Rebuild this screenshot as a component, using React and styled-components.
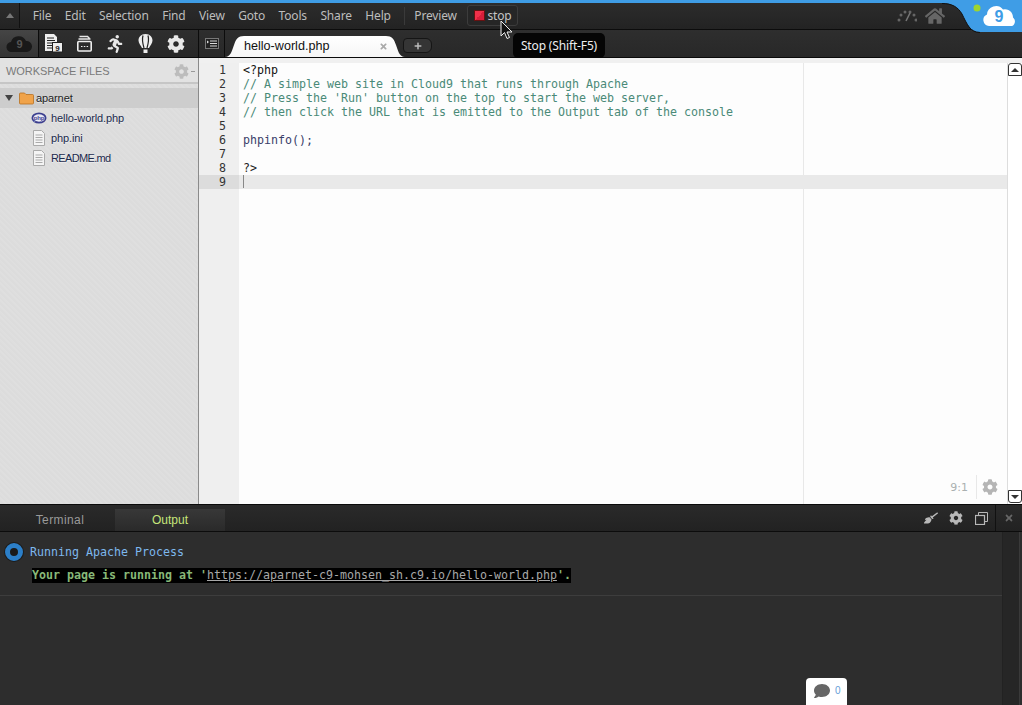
import React from "react";
import styled, { createGlobalStyle } from "styled-components";
import { FaRunning, FaCog, FaHome, FaComment, FaBroom, FaTimes, FaPlus } from "react-icons/fa";

const Global = createGlobalStyle`
  html, body { margin: 0; padding: 0; height: 100%; background: #2d2d2d; overflow: hidden; }
  #root { height: 100%; }
`;
const MONO = `"DejaVu Sans Mono", monospace`;
const UI = `"Noto Sans", "Open Sans", sans-serif`;
const SANS = `"Liberation Sans", Arial, sans-serif`;

const Page = styled.div`
  position: relative; width: 1022px; height: 705px; overflow: hidden;
  display: flex; flex-direction: column; font-family: ${SANS};
`;
const MenuBar = styled.div`
  height: 25px; padding-bottom: 1px; flex: none; display: flex; align-items: center;
  border-top: 3px solid #3f9de6;
  background: linear-gradient(#2c2c2c, #232323);
  border-bottom: 1px solid #0c0c0c;
`;
const Collapse = styled.div`
  width: 19px; height: 100%; flex: none; display: flex; align-items: center; justify-content: center;
  border-right: 1px solid #111; margin-right: 6px;
  &::before { content: ""; border-left: 4px solid transparent; border-right: 4px solid transparent; border-bottom: 5px solid #777; }
`;
const MenuItem = styled.span`
  font: 12px ${UI}; color: #bdbdbd; padding: 0 6.75px; white-space: nowrap; letter-spacing: -.17px;
`;
const MenuDivider = styled.div`
  width: 1px; height: 18px; background: #3a3a3a; margin: 0 3px 0 6px;
`;
const StopButton = styled.div`
  margin-left: 3px; width: 51px; height: 21px; box-sizing: border-box; border: 1px solid #3c3c3c; border-radius: 3px;
  background: #262626; display: flex; align-items: center; gap: 3px; padding-left: 6px;
  font: 12px ${UI}; color: #c4c4c4; letter-spacing: -.2px;
`;
const StopSquare = styled.div`
  width: 11px; height: 11px; box-sizing: border-box; background: linear-gradient(135deg, #f0304a 50%, #d81e3a 50%); border: 1px solid #611;
`;
const MenuSpacer = styled.div`flex: 1;`;
const StatusIcons = styled.div`
  display: flex; align-items: center; gap: 8px; margin-right: 77px; color: #666;
`;
const SecondBar = styled.div`
  height: 27px; flex: none; display: flex;
  background: linear-gradient(#2e2e2e, #282828);
  border-bottom: 1px solid #0a0a0a;
`;
const CloudSlot = styled.div`
  width: 38px; flex: none; display: flex; align-items: center; justify-content: center;
  background: linear-gradient(#454545, #343434); border-right: 1px solid #0c0c0c;
`;
const ToolIcons = styled.div`
  width: 160px; flex: none; display: flex; align-items: center; gap: 14px;
  padding-left: 6px; box-sizing: border-box; color: #e8e8e8; border-right: 1px solid #0c0c0c;
`;
const ListButton = styled.div`
  width: 26px; flex: none; display: flex; align-items: center; justify-content: center;
  border-right: 1px solid #0c0c0c; box-sizing: border-box; color: #ddd;
`;
const TabStrip = styled.div`
  flex: 1; display: flex; align-items: flex-end; min-width: 0;
`;
const Tab = styled.div`
  width: 180px; height: 21px; box-sizing: border-box; background: linear-gradient(#fff, #f6f6f6);
  clip-path: path("M0 21 C6 21 7 14 9 9 C11 3 13 0 19 0 L161 0 C167 0 169 3 171 9 C173 14 174 21 180 21 Z");
  display: flex; align-items: center; justify-content: space-between;
  padding: 0 17px 1px 19px; font: 12.6px ${SANS}; color: #111;
`;
const TabClose = styled.span`
  color: #aaa; display: flex; font-size: 9px;
`;
const AddTab = styled.div`
  width: 29px; height: 15px; margin: 0 0 4px -2px; box-sizing: border-box; border: 1px solid #151515; border-radius: 4px 6px 6px 4px;
  background: #353535; color: #bbb; display: flex; align-items: center; justify-content: center; font-size: 8px;
`;
const Main = styled.div`
  flex: none; height: 446px; display: flex;
`;
const Sidebar = styled.div`
  width: 199px; flex: none; box-sizing: border-box; border-right: 1px solid #8a8a8a;
  background: repeating-linear-gradient(45deg, #dfdfdf 0 1px, #dcdcdc 1px 3px, #dedede 3px 4px);
`;
const SidebarHead = styled.div`
  height: 26px; box-sizing: border-box; display: flex; align-items: center; justify-content: space-between;
  padding: 2px 3px 0 6px; font: 11px ${SANS}; color: #7a7a7a; letter-spacing: -.05px;
  border-bottom: 2px solid #c6c6c6; background: #e2e2e2; margin-bottom: 4px;
`;
const HeadGear = styled.span`
  color: #bcbcbc; display: flex; align-items: center; gap: 2px; font-size: 15px;
  &::after { content: ""; width: 4px; height: 1px; background: #999; }
`;
const Row = styled.div`
  height: 20px; display: flex; align-items: center; font: 11px ${SANS}; letter-spacing: ${p => p.$tight ? -.65 : -.1}px;
  text-shadow: 0 1px 0 rgba(255, 255, 255, .5);
  color: ${p => p.$root ? "#222" : "#1c2a4c"};
  padding-left: ${p => p.$root ? 5 : 31}px; gap: ${p => p.$root ? 2 : 4}px;
  background: ${p => p.$root ? "#cdcdcd" : "transparent"};
`;
const Arrow = styled.span`
  width: 0; height: 0; border-left: 4px solid transparent; border-right: 4px solid transparent;
  border-top: 6px solid #444; margin-right: 4px;
`;
const Editor = styled.div`
  flex: 1; display: flex; background: #fcfcfc; position: relative;
`;
const Gutter = styled.div`
  width: 40px; flex: none; box-sizing: border-box; padding-top: 5px; background: #efefef;
`;
const GutterNum = styled.div`
  height: 14px; padding-right: 13px; text-align: right;
  font: 11.63px/14px ${MONO}; color: #333; background: ${p => p.$active ? "#dcdcdc" : "transparent"};
`;
const Code = styled.div`
  flex: 1; padding-top: 5px; background: #fdfdfd; position: relative; box-sizing: border-box;
  border-radius: 5px 0 0 0;
`;
const CodeLine = styled.div`
  height: 14px; padding-left: 4px; font: 11.63px/14px ${MONO}; white-space: pre; position: relative;
  color: ${p => p.$c || "#222"}; background: ${p => p.$active ? "#e9e9e9" : "transparent"};
`;
const Caret = styled.span`
  display: inline-block; width: 1px; height: 13px; background: #888; vertical-align: top;
`;
const PrintMargin = styled.div`
  position: absolute; left: 564px; top: 0; bottom: 0; width: 1px; background: #e8e8e8;
`;
const TopShade = styled.div`
  position: absolute; left: 0; right: 0; top: 0; height: 5px; background: #f0f0f0;
`;
const EditorStatus = styled.div`
  position: absolute; right: 9px; bottom: 5px; height: 24px; display: flex; align-items: center; gap: 8px;
  font: 11px "DejaVu Sans", sans-serif; color: #aab0b0;
`;
const StatusGear = styled.span`
  display: flex; color: #b5b5b5; font-size: 16px; padding: 4px 0 4px 5px; border-left: 1px solid #e8e8e8;
`;
const Scrollbar = styled.div`
  width: 15px; flex: none; display: flex; flex-direction: column; justify-content: space-between;
  background: #fff; border-left: 1px solid #ddd; box-sizing: border-box; padding: 5px 0 1px;
`;
const ScrollButton = styled.div`
  height: 13px; box-sizing: border-box; border: 1px solid #333; border-radius: ${p => p.$up ? "3px 3px 0 0" : "0 0 3px 3px"};
  display: flex; align-items: center; justify-content: center; background: #fff;
  &::before { content: ""; border-left: 4px solid transparent; border-right: 4px solid transparent;
    ${p => p.$up ? "border-bottom: 4px solid #333;" : "border-top: 4px solid #333;"} }
`;
const BottomPanel = styled.div`
  flex: 1; display: flex; flex-direction: column; background: #2d2d2d; position: relative;
  border-top: 1px solid #0a0a0a;
`;
const PanelTabs = styled.div`
  height: 27px; flex: none; display: flex; align-items: flex-end; box-sizing: border-box;
  background: linear-gradient(#2a2a2a, #222); border-bottom: 1px solid #0c0c0c;
`;
const PanelTab = styled.div`
  width: ${p => p.$w}px; height: 22px; display: flex; align-items: center; justify-content: center;
  box-sizing: border-box; padding-left: ${p => p.$active ? 0 : 5}px;
  font: 12px ${SANS}; letter-spacing: ${p => p.$active ? 0 : .4}px; color: ${p => p.$active ? "#c6e67a" : "#9a9a9a"};
  background: ${p => p.$active ? "linear-gradient(#383838, #2a2a2a)" : "transparent"};
`;
const PanelActions = styled.div`
  margin-left: auto; height: 26px; align-self: center; display: flex; align-items: center; color: #b8b8b8;
`;
const PanelIcon = styled.span`
  display: flex; width: ${p => p.$w || 25}px; justify-content: center; font-size: 14px;
`;
const PanelClose = styled.span`
  display: flex; width: 26px; height: 100%; align-items: center; justify-content: center;
  border-left: 1px solid #111; color: #666; font-size: 10px;
`;
const PanelBody = styled.div`
  flex: 1; display: flex; min-height: 0;
`;
const Log = styled.div`
  flex: 1; min-width: 0;
`;
const ProcessRow = styled.div`
  display: flex; align-items: center; gap: 7px; height: 20px; margin: 10px 0 0 5px;
  font: 11.63px ${MONO}; color: #7db8ee;
`;
const Spinner = styled.div`
  width: 18px; height: 18px; box-sizing: border-box; flex: none; border-radius: 50%;
  border: 5px solid #2c7fc8; background: #1a1a1a; box-shadow: 0 0 0 1px #1c1c1c;
`;
const OutputRow = styled.div`
  height: 34px; padding: 3px 0 0 32px; box-sizing: border-box; border-bottom: 1px solid #3d3d3d;
`;
const OutputLine = styled.span`
  display: inline-block; background: #000; height: 15px; font: bold 11.63px/15px ${MONO}; color: #88b878; white-space: pre;
`;
const OutputLink = styled.span`
  color: #a8a8a8; font-weight: normal; text-decoration: underline;
`;
const LogScroll = styled.div`
  width: 16px; flex: none; margin-right: 2px; background: #262626; border-left: 1px solid #222; border-right: 1px solid #3a3a3a;
`;
const BlueCorner = styled.svg`
  position: absolute; right: 0; top: 0;
`;
const Tooltip = styled.div`
  position: absolute; left: 513px; top: 33px; width: 92px; height: 25px; border-radius: 5px; background: #050505;
  color: #eee; font: 12px/25px ${UI}; text-align: center; letter-spacing: -.15px; z-index: 3;
`;
const Cursor = styled.svg`
  position: absolute; left: 500px; top: 20px; z-index: 4;
`;
const ChatTab = styled.div`
  position: absolute; left: 806px; top: 678px; width: 41px; height: 27px; box-sizing: border-box; background: #fff;
  border-radius: 4px 4px 0 0; display: flex; align-items: center; gap: 5px; padding: 0 0 2px 8px;
  font: 10px ${SANS}; color: #66a0d8;
`;
const ChatIcon = styled.span`
  display: flex; color: #666; font-size: 16px;
`;

const DocBadge = () => (
  <svg width="18" height="19" viewBox="0 0 18 19">
    <path d="M0 0h9l3 3v5H8v9H0z" fill="#eee" />
    <path d="M2 4h7M2 6.500h8M2 9h5M2 11.500h5M2 14h5" stroke="#222" strokeWidth="1.100" />
    <rect x="7.500" y="8.500" width="10" height="9.500" fill="#eee" stroke="#222" />
    <text x="12.500" y="16.500" fontSize="8" fontWeight="bold" textAnchor="middle" fill="#222" fontFamily="Liberation Sans">9</text>
  </svg>
);
const Box = () => (
  <svg width="15" height="17" viewBox="0 0 15 17" fill="none">
    <path d="M2.500 1.500h8l2 2M1.500 4h12" stroke="#e8e8e8" strokeWidth="1.400" />
    <rect x="0.800" y="6.500" width="13.400" height="9.500" rx="1" stroke="#eee" strokeWidth="1.600" />
    <path d="M4 11.500h1.500M6.800 11.500h1.500M9.600 11.500h1.500" stroke="#eee" />
  </svg>
);
const Balloon = () => (
  <svg width="15" height="20" viewBox="0 0 15 20">
    <path d="M7.500 0C3 0 .5 3 .5 6.500c0 3 2.500 5 3.500 7.500h7c1-2.500 3.500-4.500 3.500-7.500C14.500 3 12 0 7.500 0z" fill="#eee" />
    <path d="M5 1.500C3.800 5.500 4.800 10 6 14M10 1.500c1.200 4 .2 8.500-1 12.500" stroke="#222" strokeWidth="1.200" fill="none" />
    <rect x="5.500" y="15.500" width="4" height="3.500" fill="#eee" />
  </svg>
);
const Cloud9Dark = () => (
  <svg width="27" height="16" viewBox="0 0 27 16">
    <path d="M6 16a5 5 0 0 1-1-10 8 8 0 0 1 15-1 5.500 5.500 0 0 1 1 11z" fill="#191919" />
    <text x="13.500" y="12" fontSize="11" fontWeight="bold" textAnchor="middle" fill="#555" fontFamily="Liberation Sans">9</text>
  </svg>
);
const ListIcon = () => (
  <svg width="14" height="11" viewBox="0 0 14 11" fill="none">
    <rect x="0.500" y="0.500" width="13" height="10" fill="#222" stroke="#777" />
    <path d="M5 3h7M5 5.500h7M5 8h7" stroke="#ddd" />
    <path d="M2 2.500l2 1.500L2 5.500z" fill="#ddd" />
  </svg>
);
const Folder = () => (
  <svg width="15" height="13" viewBox="0 0 15 13">
    <path d="M.5 2a1 1 0 0 1 1-1h4L7 2.500h6.500a1 1 0 0 1 1 1V11a1 1 0 0 1-1 1h-12a1 1 0 0 1-1-1z" fill="#f0a34a" stroke="#b7701f" strokeWidth=".8" />
  </svg>
);
const PhpIcon = () => (
  <svg width="16" height="12" viewBox="0 0 16 12">
    <ellipse cx="8" cy="6" rx="7.500" ry="5.500" fill="#3b3f8f" />
    <ellipse cx="8" cy="6" rx="5.800" ry="3.700" fill="#e8e8f4" />
    <text x="8" y="8" fontSize="6" fontWeight="bold" textAnchor="middle" fill="#3b3f8f" fontFamily="Liberation Sans">php</text>
  </svg>
);
const FileIcon = () => (
  <svg width="16" height="16" viewBox="0 0 14 16" fill="none">
    <path d="M1.500.5h8l3 3v12h-11z" fill="#f4f4f4" stroke="#aaa" />
    <path d="M3.500 5h7M3.500 7.500h7M3.500 10h7M3.500 12.500h7" stroke="#aaa" />
  </svg>
);
const Speed = () => (
  <svg width="20" height="14" viewBox="0 0 20 14" fill="#666">
    <circle cx="2" cy="11" r="1.500" /><circle cx="4" cy="6" r="1.500" /><circle cx="8" cy="3" r="1.500" />
    <circle cx="13" cy="3" r="1.500" /><circle cx="17" cy="6" r="1.500" /><circle cx="19" cy="11" r="1.500" />
    <path d="M9 12l4-8" stroke="#777" strokeWidth="1.500" />
  </svg>
);
const Restore = () => (
  <svg width="13" height="13" viewBox="0 0 13 13" fill="none" stroke="#b8b8b8">
    <rect x="0.500" y="3.500" width="9" height="9" strokeWidth="1.200" />
    <path d="M3.500 3.500v-3h9v9h-3" />
  </svg>
);

export default function App() {
  return (
    <Page>
      <Global />
      <MenuBar>
        <Collapse />
        {["File", "Edit", "Selection", "Find", "View", "Goto", "Tools", "Share", "Help"].map(m => <MenuItem key={m}>{m}</MenuItem>)}
        <MenuDivider />
        <MenuItem>Preview</MenuItem>
        <StopButton><StopSquare />stop</StopButton>
        <MenuSpacer />
        <StatusIcons><Speed /><FaHome size={20} /></StatusIcons>
      </MenuBar>
      <SecondBar>
        <CloudSlot><Cloud9Dark /></CloudSlot>
        <ToolIcons>
          <DocBadge /><Box /><FaRunning size={18} /><Balloon /><FaCog size={18} />
        </ToolIcons>
        <ListButton><ListIcon /></ListButton>
        <TabStrip>
          <Tab>hello-world.php<TabClose><FaTimes /></TabClose></Tab>
          <AddTab><FaPlus /></AddTab>
        </TabStrip>
      </SecondBar>
      <Main>
        <Sidebar>
          <SidebarHead>WORKSPACE FILES<HeadGear><FaCog /></HeadGear></SidebarHead>
          <Row $root><Arrow /><Folder />aparnet</Row>
          <Row><PhpIcon />hello-world.php</Row>
          <Row><FileIcon />php.ini</Row>
          <Row $tight><FileIcon />README.md</Row>
        </Sidebar>
        <Editor>
          <TopShade />
          <Gutter>
            {[1, 2, 3, 4, 5, 6, 7, 8, 9].map(n => <GutterNum key={n} $active={n === 9}>{n}</GutterNum>)}
          </Gutter>
          <Code>
            <PrintMargin />
            <TopShade />
            <CodeLine $c="#111">{"<?php"}</CodeLine>
            <CodeLine $c="#4a8a78">{"// A simple web site in Cloud9 that runs through Apache"}</CodeLine>
            <CodeLine $c="#4a8a78">{"// Press the 'Run' button on the top to start the web server,"}</CodeLine>
            <CodeLine $c="#4a8a78">{"// then click the URL that is emitted to the Output tab of the console"}</CodeLine>
            <CodeLine />
            <CodeLine $c="#3a3f6a">{"phpinfo();"}</CodeLine>
            <CodeLine />
            <CodeLine $c="#222">{"?>"}</CodeLine>
            <CodeLine $active><Caret /></CodeLine>
            <EditorStatus>9:1<StatusGear><FaCog /></StatusGear></EditorStatus>
          </Code>
          <Scrollbar>
            <ScrollButton $up />
            <ScrollButton />
          </Scrollbar>
        </Editor>
      </Main>
      <BottomPanel>
        <PanelTabs>
          <PanelTab $w={115}>Terminal</PanelTab>
          <PanelTab $w={110} $active>Output</PanelTab>
          <PanelActions>
            <PanelIcon><FaBroom /></PanelIcon>
            <PanelIcon><FaCog size={14} /></PanelIcon>
            <PanelIcon $w={27}><Restore /></PanelIcon>
            <PanelClose><FaTimes /></PanelClose>
          </PanelActions>
        </PanelTabs>
        <PanelBody>
          <Log>
            <ProcessRow><Spinner />Running Apache Process</ProcessRow>
            <OutputRow>
              <OutputLine>Your page is running at '<OutputLink>https://aparnet-c9-mohsen_sh.c9.io/hello-world.php</OutputLink>'.</OutputLine>
            </OutputRow>
          </Log>
          <LogScroll />
        </PanelBody>
      </BottomPanel>
      <BlueCorner width="80" height="33" viewBox="0 0 80 33">
        <path d="M0 0h80v32H38C28 32 25 24 20 14 16 7 10 3 0 3z" fill="#3f9de6" />
        <path d="M38 32.500C28 32.500 25 24 20 14 16 7 10 3.500 0 3.500" fill="none" stroke="#111" />
        <circle cx="35" cy="8" r="3.500" fill="#9ed52f" />
        <path d="M47 26a6 6 0 0 1-2-11.500 9 9 0 0 1 16-5 8 8 0 0 1 10 8 5 5 0 0 1-1 8.500z" fill="#fff" />
        <text x="57" y="22" fontSize="16" fontWeight="bold" textAnchor="middle" fill="#3f9de6" fontFamily="Liberation Sans">9</text>
      </BlueCorner>
      <Tooltip>Stop (Shift-F5)</Tooltip>
      <Cursor width="13" height="20" viewBox="0 0 13 20">
        <path d="M1 1v15l3.500-3.500L7 18.500l2.500-1-2.500-5.500h5z" fill="#111" stroke="#eee" />
      </Cursor>
      <ChatTab><ChatIcon><FaComment /></ChatIcon>0</ChatTab>
    </Page>
  );
}
